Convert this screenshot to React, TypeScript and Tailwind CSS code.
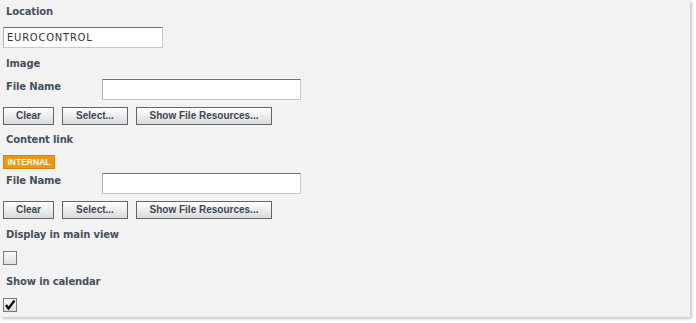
import React from "react";

const labelCls =
  "pl-[3px] h-[12px] leading-[12px] text-[10px] font-bold tracking-[-0.15px] text-[#465160] font-['DejaVu_Sans',sans-serif] whitespace-nowrap";

function Label({ children, className = "" }: { children: React.ReactNode; className?: string }) {
  return <div className={`${labelCls} ${className}`}>{children}</div>;
}

function TextBox({ value = "", className = "" }: { value?: string; className?: string }) {
  return (
    <input
      readOnly
      value={value}
      className={`h-[21px] bg-white border border-[#c9c9c9] border-t-[#727272] border-l-[#b5b5b5] px-[3px] text-[10px] tracking-[0.75px] text-[#333] font-['DejaVu_Sans',sans-serif] outline-none ${className}`}
    />
  );
}

function Btn({ children, w }: { children: React.ReactNode; w: string }) {
  return (
    <button
      className={`${w} h-[18px] border border-[#5d6873] bg-gradient-to-b from-[#ffffff] to-[#dadada] text-[10px] font-bold text-[#3c4855] font-['Liberation_Sans',sans-serif] leading-none flex items-center justify-center`}
    >
      {children}
    </button>
  );
}

function FileRow({ className = "" }: { className?: string }) {
  return (
    <div className={`flex items-start ${className}`}>
      <Label className="w-[99px] mt-[2px]">File Name</Label>
      <TextBox className="w-[199px]" />
    </div>
  );
}

function Buttons({ className = "" }: { className?: string }) {
  return (
    <div className={`flex gap-2 ${className}`}>
      <Btn w="w-[51px]">Clear</Btn>
      <Btn w="w-[66px]">Select...</Btn>
      <Btn w="w-[136px]">Show File Resources...</Btn>
    </div>
  );
}

function CheckBox({ checked = false, className = "" }: { checked?: boolean; className?: string }) {
  return (
    <div
      className={`w-[14px] h-[14px] border border-[#7a7a7a] bg-gradient-to-b from-[#fafafa] to-[#dedede] flex items-center justify-center ${className}`}
    >
      {checked && (
        <svg width="12" height="12" viewBox="0 0 12 12">
          <path d="M2 6 L4.5 9.5 L10.5 1.5" stroke="#111" strokeWidth="2.3" fill="none" strokeLinejoin="miter" />
        </svg>
      )}
    </div>
  );
}

export default function App() {
  return (
    <div className="bg-white w-[696px] h-[323px]">
      <div className="w-[690px] h-[317px] bg-[#f2f2f2] shadow-[2px_2px_3px_rgba(0,0,0,0.22)] pt-[6px] pl-[3px] flex flex-col">
        <Label>Location</Label>
        <TextBox value="EUROCONTROL" className="w-[160px] mt-[9px]" />
        <Label className="mt-[10px]">Image</Label>
        <FileRow className="mt-[9px]" />
        <Buttons className="mt-[7px]" />
        <Label className="mt-[9px]">Content link</Label>
        <div className="mt-[9px] w-[52px] h-[14px] bg-[#f0960f] border border-[#d7820a] text-white text-[8.5px] font-bold font-['Liberation_Sans',sans-serif] flex items-center justify-center leading-none">
          INTERNAL
        </div>
        <FileRow className="mt-[4px]" />
        <Buttons className="mt-[7px]" />
        <Label className="mt-[10px]">Display in main view</Label>
        <CheckBox className="mt-[10px]" />
        <Label className="mt-[11px]">Show in calendar</Label>
        <CheckBox checked className="mt-[10px]" />
      </div>
    </div>
  );
}
